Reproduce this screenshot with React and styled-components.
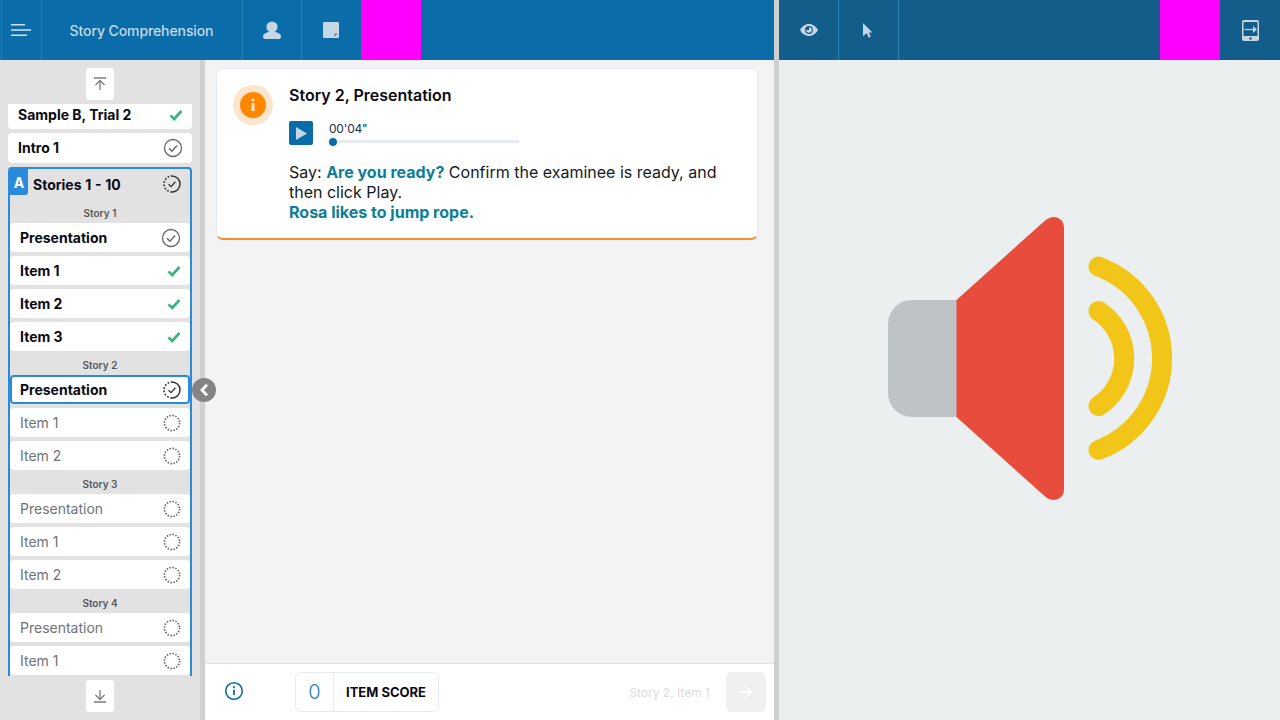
import React from "react";
import styled, { createGlobalStyle } from "styled-components";

const Global = createGlobalStyle`
  html, body { margin: 0; padding: 0; height: 100%; overflow: hidden; }
  body { font-family: Inter, "Liberation Sans", sans-serif; }
  * { box-sizing: border-box; }
`;

const Page = styled.div`
  display: flex;
  width: 1280px;
  height: 720px;
  background: #d0d0d0;
`;
const LeftPane = styled.div`
  width: 774px;
  display: flex;
  flex-direction: column;
  margin-right: 5px;
`;
const RightPane = styled.div`
  flex: 1;
  display: flex;
  flex-direction: column;
  background: #ebeff0;
`;
const TopBar = styled.div`
  height: 60px;
  flex: none;
  display: flex;
  background: ${(p) => p.$bg};
`;
const TopCell = styled.div`
  width: ${(p) => p.$w}px;
  flex: none;
  display: flex;
  align-items: center;
  justify-content: center;
  padding-right: ${(p) => (p.$w > 1 ? 1 : 0)}px;
  border-left: 1px solid ${(p) => (p.$noLine ? "transparent" : "#2b80b6")};
`;
const TitleCell = styled(TopCell)`
  color: #c7d9e8;
  font-size: 14px;
  font-weight: 500;
  letter-spacing: -0.1px;
`;
const Magenta = styled.div`
  width: 60px;
  flex: none;
  background: #ff00ff;
`;
const Spacer = styled.div`
  flex: 1;
`;
const Body = styled.div`
  flex: 1;
  display: flex;
  min-height: 0;
`;
const Sidebar = styled.aside`
  position: relative;
  width: 200px;
  flex: none;
  display: flex;
  flex-direction: column;
  align-items: center;
  padding: 8px 8px;
  gap: 4px;
  background: #e2e2e2;
  margin-right: 5px;
`;
const ScrollBtn = styled.div`
  width: 28px;
  height: 32px;
  flex: none;
  background: #fff;
  border-radius: 3px;
  display: flex;
  align-items: center;
  justify-content: center;
`;
const ListClip = styled.div`
  flex: 1;
  width: 100%;
  min-height: 0;
  overflow: hidden;
`;
const List = styled.div`
  margin-top: -4px;
  display: flex;
  flex-direction: column;
  gap: 4px;
`;
const Row = styled.div`
  height: ${(p) => p.$h || 29}px;
  flex: none;
  display: flex;
  align-items: center;
  justify-content: space-between;
  background: #fff;
  border-radius: 4px;
  padding: 0 ${(p) => (p.$selected ? 6 : 8)}px 0 ${(p) => (p.$selected ? 8 : 10)}px;
  font-size: 14px;
  line-height: 18px;
  font-weight: ${(p) => (p.$done ? 700 : 400)};
  color: ${(p) => (p.$done ? "#0a0a14" : "#6f7276")};
  border: ${(p) => (p.$selected ? "2px solid #2a8bdc" : "none")};
`;
const IconSlot = styled.span`
  width: 20px;
  height: 20px;
  display: flex;
  align-items: center;
  justify-content: center;
  flex: none;
`;
const Group = styled.div`
  border: 2px solid #2a8bdc;
  border-radius: 4px 4px 0 0;
  display: flex;
  flex-direction: column;
  gap: 4px;
`;
const GroupHeader = styled.div`
  height: 30px;
  display: flex;
  align-items: flex-start;
  font-size: 14px;
  font-weight: 700;
  color: #0a0a14;
`;
const Badge = styled.span`
  width: 18px;
  height: 26px;
  background: #2a8bdc;
  color: #fff;
  border-radius: 0 0 3px 0;
  display: flex;
  align-items: center;
  justify-content: center;
  font-size: 14px;
  font-weight: 700;
  flex: none;
`;
const GroupTitle = styled.span`
  flex: 1;
  margin-left: 5px;
  line-height: 31px;
  word-spacing: 0.4px;
`;
const GroupIcon = styled(IconSlot)`
  margin-top: 5px;
  margin-right: 8px;
`;
const StoryLabel = styled.div`
  height: 16px;
  text-align: center;
  font-size: 10px;
  font-weight: 600;
  line-height: 20px;
  color: #55585c;
`;
const Collapse = styled.div`
  position: absolute;
  left: 192px;
  top: 318px;
  width: 24px;
  height: 24px;
  border-radius: 50%;
  background: #848484;
  display: flex;
  align-items: center;
  justify-content: center;
  z-index: 2;
`;
const Main = styled.main`
  flex: 1;
  display: flex;
  flex-direction: column;
  min-width: 0;
`;
const Content = styled.div`
  flex: 1;
  background: #f3f3f3;
  padding: 8px 16px 0 11px;
`;
const Card = styled.div`
  height: 172px;
  background: #fff;
  border: 1px solid #e6eaf2;
  border-bottom: 2px solid #f78f2e;
  border-radius: 7px;
  padding: 16px 16px 0 16px;
  display: flex;
  gap: 16px;
`;
const InfoHalo = styled.div`
  width: 40px;
  height: 40px;
  flex: none;
  border-radius: 50%;
  background: #fde4cc;
  display: flex;
  align-items: center;
  justify-content: center;
`;
const InfoDot = styled.div`
  width: 26px;
  height: 26px;
  border-radius: 50%;
  background: #ff8800;
  display: flex;
  align-items: center;
  justify-content: center;
`;
const CardBody = styled.div`
  flex: 1;
  min-width: 0;
`;
const CardTitle = styled.div`
  font-size: 16px;
  font-weight: 600;
  line-height: 20px;
  color: #0a0a14;
`;
const Player = styled.div`
  display: flex;
  gap: 16px;
  margin-top: 16px;
  height: 24px;
`;
const PlayBtn = styled.div`
  width: 24px;
  height: 24px;
  background: #0a6ca8;
  border-radius: 2px;
  display: flex;
  align-items: center;
  justify-content: center;
`;
const Track = styled.div`
  width: 190px;
`;
const Time = styled.div`
  font-size: 12px;
  line-height: 16px;
  color: #22303c;
  letter-spacing: -0.2px;
`;
const Bar = styled.div`
  position: relative;
  height: 3px;
  margin-top: 3px;
  background: #e6eaf2;
  border-radius: 2px;
`;
const Knob = styled.div`
  position: absolute;
  left: 0;
  top: -2.5px;
  width: 8px;
  height: 8px;
  border-radius: 50%;
  background: #0a6ca8;
`;
const Prompt = styled.div`
  margin-top: 17px;
  font-size: 16px;
  line-height: 20px;
  color: #141a24;
`;
const Say = styled.strong`
  font-weight: 700;
  color: #0b7f99;
`;
const FooterInfo = styled.svg`
  margin-bottom: 2px;
  flex: none;
`;
const Footer = styled.div`
  height: 57px;
  flex: none;
  background: #fff;
  border-top: 1px solid #e2e2e2;
  display: flex;
  align-items: center;
  padding: 0 8px 0 19px;
`;
const ScoreBox = styled.div`
  margin-left: 51px;
  width: 144px;
  height: 40px;
  border: 1px solid #e6eaf2;
  border-radius: 6px;
  display: flex;
  align-items: center;
`;
const ScoreValue = styled.div`
  width: 38px;
  height: 100%;
  border-right: 1px solid #e6eaf2;
  display: flex;
  align-items: center;
  justify-content: center;
  font-size: 20px;
  color: #2a7fc0;
  font-weight: 300;
`;
const ScoreLabel = styled.div`
  flex: 1;
  text-align: center;
  font-size: 13px;
  font-weight: 700;
  color: #0a0a14;
`;
const NextLabel = styled.div`
  margin-left: auto;
  font-size: 12px;
  color: #dcdcdc;
`;
const NextBtn = styled.div`
  margin-left: 16px;
  width: 40px;
  height: 40px;
  background: #f0f0f0;
  border-radius: 6px;
  display: flex;
  align-items: center;
  justify-content: center;
`;
const Stage = styled.div`
  flex: 1;
  display: flex;
  align-items: center;
  justify-content: center;
  padding-bottom: 60px;
`;
const CheckSvg = styled.svg`
  margin-left: 4px;
  flex: none;
`;
const CircleSvg = styled.svg`
  margin-right: 2px;
  flex: none;
`;

const Check = () => (
  <CheckSvg width="14" height="12" viewBox="0 0 14 12">
    <path d="M1.500 6.300 5.200 10 12.500 2" fill="none" stroke="#3cb281" strokeWidth="2.600" />
  </CheckSvg>
);
const CircleCheck = () => (
  <CircleSvg width="20" height="20" viewBox="0 0 20 20" fill="none">
    <circle cx="10" cy="10" r="8.500" stroke="#6a6a6a" strokeWidth="1.300" />
    <path d="M6 10.300 8.900 13.200l5.200-5.800" stroke="#6a6a6a" strokeWidth="1.500" />
  </CircleSvg>
);
const Partial = () => (
  <svg width="18" height="18" viewBox="0 0 18 18" fill="none">
    <path d="M9 1a8 8 0 0 1 0 16" stroke="#333" strokeWidth="1.500" />
    <path d="M9 17A8 8 0 0 1 9 1" stroke="#333" strokeWidth="1.700" strokeDasharray="1.700 1.700" />
    <path d="M5.600 9.200 8 11.600l4.400-4.800" stroke="#333" strokeWidth="1.300" />
  </svg>
);
const Pending = () => (
  <svg width="18" height="18" viewBox="0 0 18 18" fill="none">
    <circle cx="9" cy="9" r="7.600" stroke="#6a6a6a" strokeWidth="1.700" strokeDasharray="1.500 1.500" />
  </svg>
);
const StatusIcon = ({ s }) => {
  if (s === "check") return <Check />;
  if (s === "circle") return <CircleCheck />;
  if (s === "partial") return <Partial />;
  return <Pending />;
};

const stories = [
  { label: "Story 1", rows: [["Presentation", "circle"], ["Item 1", "check"], ["Item 2", "check"], ["Item 3", "check"]] },
  { label: "Story 2", rows: [["Presentation", "partial", true], ["Item 1"], ["Item 2"]] },
  { label: "Story 3", rows: [["Presentation"], ["Item 1"], ["Item 2"]] },
  { label: "Story 4", rows: [["Presentation"], ["Item 1"], ["Item 2"]] },
];

const topIcon = "#c5d6e5";

export default function App() {
  return (
    <Page>
      <Global />
      <LeftPane>
        <TopBar $bg="#0a6ca8">
          <TopCell $w={1} $noLine />
          <TopCell $w={40}>
            <svg width="20" height="12" viewBox="0 0 20 12">
              <path d="M0 .7h14M0 6h20M0 11.300h16" stroke="#d3e2ee" strokeWidth="1.500" fill="none" />
            </svg>
          </TopCell>
          <TitleCell $w={201}>Story Comprehension</TitleCell>
          <TopCell $w={59}>
            <svg width="18" height="18" viewBox="0 0 18 18" fill={topIcon}>
              <circle cx="9" cy="6" r="5.600" />
              <path d="M0 15.500C0 12.500 4 10.800 9 10.800s9 1.700 9 4.700c0 1.600-.8 2.500-2 2.500H2c-1.200 0-2-.9-2-2.500z" />
            </svg>
          </TopCell>
          <TopCell $w={60}>
            <svg width="16" height="16" viewBox="0 0 16 16">
              <path d="M1 0h14a1 1 0 0 1 1 1v14a1 1 0 0 1-1 1H1a1 1 0 0 1-1-1V1a1 1 0 0 1 1-1z" fill={topIcon} />
              <path d="M11.500 14.800v-3.300h3.300z" fill="#5c7f9f" />
            </svg>
          </TopCell>
          <Magenta />
          <Spacer />
        </TopBar>
        <Body>
          <Sidebar>
            <ScrollBtn>
              <svg width="14" height="14" viewBox="0 0 14 14" fill="none" stroke="#7c7c7c" strokeWidth="1.300">
                <path d="M1 1h12M7 13V3.500M2.500 8 7 3.500 11.500 8" />
              </svg>
            </ScrollBtn>
            <ListClip>
              <List>
                <Row $done>
                  Sample B, Trial 2
                  <IconSlot><Check /></IconSlot>
                </Row>
                <Row $done $h={30}>
                  Intro 1
                  <IconSlot><CircleCheck /></IconSlot>
                </Row>
                <Group>
                  <GroupHeader>
                    <Badge>A</Badge>
                    <GroupTitle>Stories 1 - 10</GroupTitle>
                    <GroupIcon><Partial /></GroupIcon>
                  </GroupHeader>
                  {stories.map((story) => (
                    <React.Fragment key={story.label}>
                      <StoryLabel>{story.label}</StoryLabel>
                      {story.rows.map(([name, status, selected]) => (
                        <Row key={name} $done={!!status} $selected={selected}>
                          {name}
                          <IconSlot><StatusIcon s={status} /></IconSlot>
                        </Row>
                      ))}
                    </React.Fragment>
                  ))}
                </Group>
              </List>
            </ListClip>
            <ScrollBtn>
              <svg width="14" height="14" viewBox="0 0 14 14" fill="none" stroke="#7c7c7c" strokeWidth="1.300">
                <path d="M1 13h12M7 1v9.500M2.500 6 7 10.500 11.500 6" />
              </svg>
            </ScrollBtn>
            <Collapse>
              <svg width="10" height="14" viewBox="0 0 10 14" fill="none" stroke="#fff" strokeWidth="2.800">
                <path d="M8 1.800 3 7l5 5.200" />
              </svg>
            </Collapse>
          </Sidebar>
          <Main>
            <Content>
              <Card>
                <InfoHalo>
                  <InfoDot>
                    <svg width="6" height="14" viewBox="0 0 6 14" fill="#fde4cc">
                      <circle cx="3" cy="2" r="1.600" />
                      <rect x="1.500" y="5" width="3" height="8" rx=".6" />
                    </svg>
                  </InfoDot>
                </InfoHalo>
                <CardBody>
                  <CardTitle>Story 2, Presentation</CardTitle>
                  <Player>
                    <PlayBtn>
                      <svg width="11" height="13" viewBox="0 0 11 13"><path d="M0 0l11 6.500L0 13z" fill="#c5d6e5" /></svg>
                    </PlayBtn>
                    <Track>
                      <Time>00'04"</Time>
                      <Bar><Knob /></Bar>
                    </Track>
                  </Player>
                  <Prompt>
                    Say: <Say>Are you ready?</Say> Confirm the examinee is ready, and then click Play.
                    <br />
                    <Say>Rosa likes to jump rope.</Say>
                  </Prompt>
                </CardBody>
              </Card>
            </Content>
            <Footer>
              <FooterInfo width="20" height="20" viewBox="0 0 20 20" fill="none">
                <circle cx="10" cy="10" r="8.300" stroke="#0a6ca8" strokeWidth="1.600" />
                <circle cx="10" cy="6.300" r="1.100" fill="#0a6ca8" />
                <rect x="9.100" y="8.800" width="1.800" height="5.200" fill="#0a6ca8" />
              </FooterInfo>
              <ScoreBox>
                <ScoreValue>0</ScoreValue>
                <ScoreLabel>ITEM SCORE</ScoreLabel>
              </ScoreBox>
              <NextLabel>Story 2, Item 1</NextLabel>
              <NextBtn>
                <svg width="14" height="14" viewBox="0 0 14 14" fill="none" stroke="#fff" strokeWidth="2">
                  <path d="M1 7h11M7.500 2l5 5-5 5" />
                </svg>
              </NextBtn>
            </Footer>
          </Main>
        </Body>
      </LeftPane>
      <RightPane>
        <TopBar $bg="#125d8a">
          <TopCell $w={59} $noLine>
            <svg width="18" height="12" viewBox="0 0 18 12">
              <path d="M0 6c2-3.600 5.200-6 9-6s7 2.400 9 6c-2 3.600-5.200 6-9 6S2 9.600 0 6z" fill={topIcon} />
              <circle cx="9" cy="6" r="3.900" fill="#125d8a" />
              <path d="M9 3.200A2.800 2.800 0 1 1 6.200 6H9z" fill={topIcon} />
            </svg>
          </TopCell>
          <TopCell $w={60}>
            <svg width="10" height="15" viewBox="0 0 10 15">
              <path d="M0 0l9.500 9.400H6l1.700 4.300-2 1-1.800-4.500L0 13z" fill={topIcon} />
            </svg>
          </TopCell>
          <TopCell $w={1} />
          <Spacer />
          <Magenta />
          <TopCell $w={60} $noLine>
            <svg width="17" height="21" viewBox="0 0 17 21">
              <rect width="17" height="21" rx="2" fill={topIcon} />
              <rect x="1.500" y="2" width="14" height="14" fill="#125d8a" />
              <circle cx="8.500" cy="18.500" r="1.200" fill="#125d8a" />
              <path d="M2.500 9.500H11" stroke={topIcon} strokeWidth="1.200" />
              <path d="M11 6l4 3.500-4 3.500z" fill={topIcon} />
            </svg>
          </TopCell>
        </TopBar>
        <Stage>
          <svg width="320" height="320" viewBox="0 0 320 320" fill="none">
            <path d="M87 100H42a24 24 0 0 0-24 24v69a24 24 0 0 0 24 24h45z" fill="#bdc3c7" />
            <path d="M86.500 100 174 21.500Q179 17 184 17a10 10 0 0 1 10 10v263a10 10 0 0 1-10 10q-5 0-10-4.500L86.500 217z" fill="#e74c3c" />
            <path d="M228.500 66.500A98 98 0 0 1 228.500 250M228.500 111A56.700 56.700 0 0 1 228.500 206" stroke="#f1c619" strokeWidth="20" strokeLinecap="round" />
          </svg>
        </Stage>
      </RightPane>
    </Page>
  );
}
